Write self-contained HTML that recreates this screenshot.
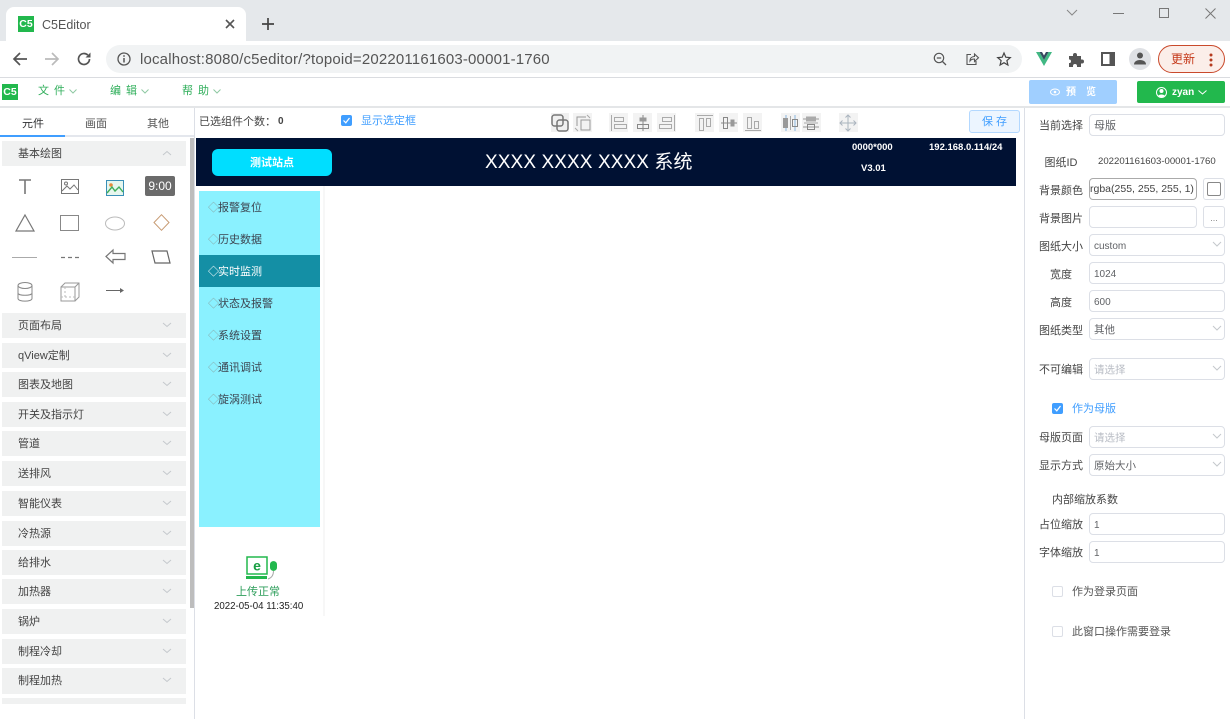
<!DOCTYPE html>
<html lang="zh"><head><meta charset="utf-8"><title>C5Editor</title>
<style>
*{box-sizing:border-box}
html,body{margin:0;padding:0;width:1230px;height:719px;overflow:hidden;background:#fff;font-family:"Liberation Sans","Noto Sans CJK SC",sans-serif;font-size:11px;color:#444}
.a{position:absolute}
.t{position:absolute;white-space:nowrap;line-height:16px}
svg{position:absolute;overflow:visible}
.row{position:absolute;left:2px;width:184px;height:25px;background:#f0f1f1;line-height:27px;padding-left:16px;font-size:11px;color:#444}
.row svg{left:160px;top:9px}
.lb{position:absolute;white-space:nowrap;line-height:16px;font-size:11px;color:#444;text-align:center;width:60px;left:1031px;margin-top:1px}
.in{position:absolute;left:1089px;width:136px;height:22px;border:1px solid #dcdfe6;border-radius:4px;background:#fff;font-size:10px;line-height:23px;padding-left:4px;color:#606266;white-space:nowrap;overflow:hidden}
.in svg{left:122px;top:6px}
.cj{font-size:10.5px}
.ph{color:#b8bcc4}
.mi{position:absolute;left:199px;width:121px;height:32px;line-height:34px;padding-left:9px;font-size:11px;color:#3c4450;white-space:nowrap}
.mi span{margin-right:-1px}
.tb{position:absolute;top:113px;width:19px;height:19px;background:#f3f3f3}
.cb{position:absolute;width:11px;height:11px;border-radius:2px}
</style></head><body>

<!-- browser tab strip -->
<div class="a" style="left:0;top:0;width:1230px;height:41px;background:#e5e8eb"></div>
<div class="a" style="left:6px;top:7px;width:240px;height:34px;background:#fff;border-radius:8px 8px 0 0"></div>
<div class="a" style="left:18px;top:16px;width:16px;height:16px;background:#22b84d;color:#fff;font-size:10.5px;font-weight:bold;line-height:17px;text-align:center">C5</div>
<div class="t" style="left:42px;top:17px;font-size:12.5px;color:#555">C5Editor</div>
<svg style="left:225px;top:19px" width="10" height="10" viewBox="0 0 10 10"><path d="M1 1L9 9M9 1L1 9" stroke="#555" stroke-width="1.6" fill="none"/></svg>
<svg style="left:262px;top:18px" width="12" height="12" viewBox="0 0 12 12"><path d="M6 0V12M0 6H12" stroke="#444" stroke-width="1.7" fill="none"/></svg>
<svg style="left:1066px;top:9px" width="12" height="8" viewBox="0 0 12 8"><path d="M1 1L6 6L11 1" stroke="#888" fill="none"/></svg>
<svg style="left:1113px;top:13px" width="11" height="2"><path d="M0 .5H11" stroke="#777" fill="none"/></svg>
<svg style="left:1159px;top:8px" width="10" height="10"><rect x=".5" y=".5" width="9" height="9" stroke="#777" fill="none"/></svg>
<svg style="left:1205px;top:8px" width="11" height="11"><path d="M.5 .5L10.5 10.5M10.5 .5L.5 10.5" stroke="#777" fill="none"/></svg>

<!-- toolbar -->
<div class="a" style="left:0;top:41px;width:1230px;height:37px;background:#fff;border-bottom:1px solid #dadce0"></div>
<svg style="left:12px;top:51px" width="16" height="16" viewBox="0 0 16 16"><path d="M15 8H2M8 2L2 8L8 14" stroke="#555" stroke-width="1.7" fill="none"/></svg>
<svg style="left:44px;top:51px" width="16" height="16" viewBox="0 0 16 16"><path d="M1 8H14M8 2L14 8L8 14" stroke="#bbb" stroke-width="1.7" fill="none"/></svg>
<svg style="left:76px;top:51px" width="16" height="16" viewBox="0 0 16 16"><path d="M13.5 8A5.5 5.5 0 1 1 11.8 4" stroke="#555" stroke-width="1.7" fill="none"/><path d="M14.5 1.5V6.5H9.5Z" fill="#555"/></svg>
<div class="a" style="left:106px;top:45px;width:916px;height:28px;background:#f1f3f4;border-radius:14px"></div>
<svg style="left:117px;top:52px" width="14" height="14" viewBox="0 0 14 14"><circle cx="7" cy="7" r="6" stroke="#555" stroke-width="1.3" fill="none"/><path d="M7 6V10.5" stroke="#555" stroke-width="1.5"/><circle cx="7" cy="4" r=".9" fill="#555"/></svg>
<div class="t" style="left:140px;top:51px;font-size:15px;letter-spacing:.17px;line-height:18px;color:#555">localhost:8080/c5editor/?topoid=202201161603-00001-1760</div>
<svg style="left:933px;top:52px" width="14" height="14" viewBox="0 0 14 14"><circle cx="6" cy="6" r="4.7" stroke="#555" stroke-width="1.2" fill="none"/><path d="M3.8 6H8.2M9.5 9.5L13 13" stroke="#555" stroke-width="1.3" fill="none"/></svg>
<svg style="left:965px;top:52px" width="14" height="14" viewBox="0 0 14 14"><path d="M6 2.5H2V12.5H11V9M5 9C5 6 7 4.500 9.500 4.500V2L13.500 5.800L9.500 9.500V7C7.500 7 6 7.500 5 9Z" stroke="#555" stroke-width="1.1" fill="none"/></svg>
<svg style="left:997px;top:52px" width="14" height="14" viewBox="0 0 14 14"><path d="M7 1L8.800 5.200L13.300 5.600L9.900 8.600L10.900 13L7 10.700L3.100 13L4.100 8.600L.7 5.600L5.200 5.200Z" stroke="#444" stroke-width="1.2" fill="none"/></svg>
<svg style="left:1036px;top:52px" width="16" height="14" viewBox="0 0 16 14"><path d="M0 0H3.500L8 8L12.500 0H16L8 14Z" fill="#41b883"/><path d="M3.500 0H6L8 3.500L10 0H12.500L8 8Z" fill="#34495e"/></svg>
<svg style="left:1068px;top:52px" width="16" height="15" viewBox="0 0 16 15"><path d="M1 4H5V3A2 2 0 0 1 9 3V4H13V7.500H14A2 2 0 0 1 14 11.500H13V15H9V14A2 2 0 0 0 5 14V15H1V11H2A2 2 0 0 0 2 7.500H1Z" fill="#555"/></svg>
<svg style="left:1101px;top:52px" width="14" height="14" viewBox="0 0 14 14"><rect width="14" height="14" fill="#555"/><rect x="2" y="2" width="6.500" height="10" fill="#fff"/></svg>
<div class="a" style="left:1129px;top:48px;width:22px;height:22px;border-radius:50%;background:#dfe1e5"></div>
<svg style="left:1134px;top:52px" width="12" height="13" viewBox="0 0 12 13"><circle cx="6" cy="3.500" r="3" fill="#555"/><path d="M0 12.500C0 9.500 3 8 6 8S12 9.500 12 12.500Z" fill="#555"/></svg>
<div class="a" style="left:1158px;top:45px;width:67px;height:28px;border:1px solid #c9492b;border-radius:14px;background:#fbeee9"></div>
<div class="t" style="left:1171px;top:51px;font-size:12px;color:#c5391a">更新</div>
<svg style="left:1209px;top:53px" width="4" height="14"><circle cx="2" cy="2" r="1.500" fill="#b53a1d"/><circle cx="2" cy="7" r="1.500" fill="#b53a1d"/><circle cx="2" cy="12" r="1.500" fill="#b53a1d"/></svg>

<!-- app menu -->
<div class="a" style="left:0;top:106px;width:1230px;height:2px;background:#e4e6e8"></div>
<div class="a" style="left:2px;top:84px;width:16px;height:16px;background:#22b84d;color:#fff;font-size:10.5px;font-weight:bold;line-height:17px;text-align:center">C5</div>
<div class="t" style="left:38px;top:83px;color:#2fae5a;letter-spacing:1px">文 件</div>
<div class="t" style="left:110px;top:83px;color:#2fae5a;letter-spacing:1px">编 辑</div>
<div class="t" style="left:182px;top:83px;color:#2fae5a;letter-spacing:1px">帮 助</div>
<svg style="left:69px;top:89px" width="8" height="5"><path d="M.5 .5L4 4L7.500 .5" stroke="#8fc9a3" fill="none"/></svg>
<svg style="left:141px;top:89px" width="8" height="5"><path d="M.5 .5L4 4L7.500 .5" stroke="#8fc9a3" fill="none"/></svg>
<svg style="left:213px;top:89px" width="8" height="5"><path d="M.5 .5L4 4L7.500 .5" stroke="#8fc9a3" fill="none"/></svg>
<div class="a" style="left:1029px;top:80px;width:88px;height:24px;background:#a0cfff;border-radius:2px"></div>
<svg style="left:1050px;top:88px" width="10" height="8" viewBox="0 0 10 8"><ellipse cx="5" cy="4" rx="4.500" ry="3" stroke="#fff" fill="none"/><circle cx="5" cy="4" r="1.300" fill="#fff"/></svg>
<div class="t" style="left:1066px;top:85px;font-size:10px;color:#fff;font-weight:bold">预</div>
<div class="t" style="left:1086px;top:85px;font-size:10px;color:#fff;font-weight:bold">览</div>
<div class="a" style="left:1137px;top:81px;width:88px;height:22px;background:#22b84d;border-radius:2px"></div>
<svg style="left:1156px;top:87px" width="11" height="11" viewBox="0 0 11 11"><circle cx="5.500" cy="5.500" r="5" stroke="#fff" fill="none"/><circle cx="5.500" cy="4" r="2" fill="#fff"/><path d="M2 9C3 7 8 7 9 9L5.500 10.500Z" fill="#fff"/></svg>
<div class="t" style="left:1172px;top:85px;font-size:10px;color:#fff;font-weight:bold">zyan</div>
<svg style="left:1198px;top:90px" width="9" height="5"><path d="M.5 .5L4.500 4L8.500 .5" stroke="#fff" fill="none"/></svg>

<!-- left panel -->
<div class="a" style="left:194px;top:108px;width:1px;height:611px;background:#dcdfe6"></div>
<div class="a" style="left:0;top:135px;width:194px;height:2px;background:#e4e7ed"></div>
<div class="a" style="left:0;top:135px;width:65px;height:2px;background:#409eff"></div>
<div class="t" style="left:22px;top:116px;color:#303133">元件</div>
<div class="t" style="left:85px;top:116px;color:#555">画面</div>
<div class="t" style="left:147px;top:116px;color:#555">其他</div>
<div class="a" style="left:190px;top:138px;width:4px;height:470px;background:#bdbdbd"></div>

<div class="row" style="top:141px">基本绘图<svg width="10" height="6"><path d="M1 5L5 1.500L9 5" stroke="#c4c8cc" fill="none"/></svg></div>

<svg style="left:19px;top:179px" width="12" height="15" viewBox="0 0 12 15"><path d="M0 1H12M6 1V15" stroke="#777" stroke-width="1.600" fill="none"/></svg>
<svg style="left:61px;top:179px" width="18" height="15" viewBox="0 0 18 15"><rect x=".5" y=".5" width="17" height="14" stroke="#777" fill="none"/><circle cx="5" cy="4.500" r="1.500" stroke="#777" fill="none"/><path d="M1 12L6 7L9 10L13 6L17 11" stroke="#777" fill="none"/></svg>
<svg style="left:106px;top:180px" width="18" height="16" viewBox="0 0 18 16"><rect x=".5" y=".5" width="17" height="15" fill="#e6f6ee" stroke="#3a8fb7"/><circle cx="5" cy="5" r="1.800" fill="#e58a3b"/><path d="M1 13L6 7L9 11L13 7L17 12" stroke="#3fae5a" stroke-width="1.400" fill="none"/></svg>
<div class="a" style="left:145px;top:176px;width:30px;height:20px;background:#6b6b6b;border-radius:2px;color:#fff;font-size:12px;line-height:20px;text-align:center">9:00</div>

<svg style="left:15px;top:214px" width="20" height="18" viewBox="0 0 20 18"><path d="M10 1L19 17H1Z" stroke="#777" stroke-width="1.200" fill="none"/></svg>
<svg style="left:60px;top:215px" width="20" height="16"><rect x=".5" y=".5" width="18" height="15" stroke="#888" fill="none"/></svg>
<svg style="left:105px;top:216px" width="20" height="15"><ellipse cx="10" cy="7.500" rx="9.500" ry="6.500" stroke="#bbb" fill="none"/></svg>
<svg style="left:153px;top:214px" width="17" height="17" viewBox="0 0 17 17"><path d="M8.500 .7L16 8.500L8.500 16.300L1 8.500Z" stroke="#c79a72" fill="none"/></svg>

<div class="a" style="left:12px;top:257px;width:25px;height:1px;background:#aaa"></div>
<svg style="left:61px;top:256px" width="18" height="3"><path d="M0 1.500H18" stroke="#777" stroke-width="1.200" stroke-dasharray="4 3" fill="none"/></svg>
<svg style="left:105px;top:249px" width="21" height="15" viewBox="0 0 21 15"><path d="M1 7.500L8 1V4.500H20V10.500H8V14Z" stroke="#777" stroke-width="1.200" fill="none"/></svg>
<svg style="left:151px;top:250px" width="20" height="14" viewBox="0 0 20 14"><path d="M1 1H16L19 13H4Z" stroke="#666" stroke-width="1.200" fill="none"/></svg>

<svg style="left:17px;top:282px" width="16" height="20" viewBox="0 0 16 20"><ellipse cx="8" cy="3.500" rx="7" ry="3" stroke="#888" fill="none"/><path d="M1 3.500V16.500C1 20 15 20 15 16.500V3.500M1 11C1 14 15 14 15 11" stroke="#888" fill="none"/></svg>
<svg style="left:60px;top:282px" width="20" height="20" viewBox="0 0 20 20"><path d="M1 5H15V19H1ZM1 5L5 1H19V15L15 19M15 5L19 1" stroke="#999" fill="none"/><path d="M1 15H3M5 15H15M5 5V15" stroke="#bbb" stroke-dasharray="2 2" fill="none"/></svg>
<svg style="left:106px;top:287px" width="19" height="7" viewBox="0 0 19 7"><path d="M0 3.500H15" stroke="#666" fill="none"/><path d="M14 1L18 3.500L14 6Z" fill="#666"/></svg>

<div class="row" style="top:313px">页面布局<svg width="10" height="6"><path d="M1 1L5 4.500L9 1" stroke="#c4c8cc" fill="none"/></svg></div>
<div class="row" style="top:343px">qView定制<svg width="10" height="6"><path d="M1 1L5 4.500L9 1" stroke="#c4c8cc" fill="none"/></svg></div>
<div class="row" style="top:372px">图表及地图<svg width="10" height="6"><path d="M1 1L5 4.500L9 1" stroke="#c4c8cc" fill="none"/></svg></div>
<div class="row" style="top:402px">开关及指示灯<svg width="10" height="6"><path d="M1 1L5 4.500L9 1" stroke="#c4c8cc" fill="none"/></svg></div>
<div class="row" style="top:431px">管道<svg width="10" height="6"><path d="M1 1L5 4.500L9 1" stroke="#c4c8cc" fill="none"/></svg></div>
<div class="row" style="top:461px">送排风<svg width="10" height="6"><path d="M1 1L5 4.500L9 1" stroke="#c4c8cc" fill="none"/></svg></div>
<div class="row" style="top:491px">智能仪表<svg width="10" height="6"><path d="M1 1L5 4.500L9 1" stroke="#c4c8cc" fill="none"/></svg></div>
<div class="row" style="top:521px">冷热源<svg width="10" height="6"><path d="M1 1L5 4.500L9 1" stroke="#c4c8cc" fill="none"/></svg></div>
<div class="row" style="top:550px">给排水<svg width="10" height="6"><path d="M1 1L5 4.500L9 1" stroke="#c4c8cc" fill="none"/></svg></div>
<div class="row" style="top:579px">加热器<svg width="10" height="6"><path d="M1 1L5 4.500L9 1" stroke="#c4c8cc" fill="none"/></svg></div>
<div class="row" style="top:609px">锅炉<svg width="10" height="6"><path d="M1 1L5 4.500L9 1" stroke="#c4c8cc" fill="none"/></svg></div>
<div class="row" style="top:639px">制程冷却<svg width="10" height="6"><path d="M1 1L5 4.500L9 1" stroke="#c4c8cc" fill="none"/></svg></div>
<div class="row" style="top:668px;height:26px">制程加热<svg width="10" height="6"><path d="M1 1L5 4.500L9 1" stroke="#c4c8cc" fill="none"/></svg></div>
<div class="a" style="left:2px;top:698px;width:184px;height:6px;background:#f0f1f1"></div>

<!-- centre toolbar -->
<div class="t" style="left:199px;top:114px;color:#444">已选组件个数：</div>
<div class="t" style="left:278px;top:114px;font-size:10px;font-weight:bold;color:#444">0</div>
<div class="cb" style="left:341px;top:115px;background:#409eff"></div>
<svg style="left:343px;top:117px" width="7" height="7" viewBox="0 0 7 7"><path d="M.5 3.500L2.800 5.800L6.500 1" stroke="#fff" stroke-width="1.200" fill="none"/></svg>
<div class="t" style="left:361px;top:113px;color:#409eff">显示选定框</div>

<div class="tb" style="left:551px;width:18px;background:#f0f0f0"></div>
<svg style="left:551px;top:114px" width="18" height="18" viewBox="0 0 18 18"><rect x="1" y="1" width="11" height="11" rx="2.500" stroke="#777" stroke-width="1.500" fill="none"/><rect x="6" y="6" width="11" height="11" rx="2.500" stroke="#777" stroke-width="1.500" fill="none"/></svg>
<div class="tb" style="left:573px"></div>
<svg style="left:574px;top:114px" width="18" height="18" viewBox="0 0 18 18"><path d="M3 12V3H12M7 6H16V16H7Z" stroke="#999" fill="none"/><path d="M13 1L16 4M1 14L4 17" stroke="#aaa" fill="none"/></svg>
<div class="tb" style="left:609px"></div>
<svg style="left:610px;top:114px" width="18" height="18" viewBox="0 0 18 18"><path d="M1.500 1V17" stroke="#aaa" fill="none"/><rect x="4.500" y="3.500" width="9" height="4" stroke="#aaa" fill="none"/><rect x="4.500" y="10.500" width="12" height="4" stroke="#aaa" fill="none"/></svg>
<div class="tb" style="left:633px"></div>
<svg style="left:634px;top:114px" width="18" height="18" viewBox="0 0 18 18"><path d="M9 1V17" stroke="#888" fill="none"/><rect x="5.500" y="3.500" width="7" height="4" fill="#999"/><rect x="3.500" y="10.500" width="11" height="4" stroke="#888" fill="none"/></svg>
<div class="tb" style="left:657px"></div>
<svg style="left:658px;top:114px" width="18" height="18" viewBox="0 0 18 18"><path d="M16.500 1V17" stroke="#aaa" fill="none"/><rect x="4.500" y="3.500" width="9" height="4" stroke="#aaa" fill="none"/><rect x="1.500" y="10.500" width="12" height="4" stroke="#aaa" fill="none"/></svg>
<div class="tb" style="left:695px"></div>
<svg style="left:696px;top:114px" width="18" height="18" viewBox="0 0 18 18"><path d="M1 1.500H17" stroke="#aaa" fill="none"/><rect x="3.500" y="4.500" width="4" height="12" stroke="#aaa" fill="none"/><rect x="10.500" y="4.500" width="4" height="8" stroke="#aaa" fill="none"/></svg>
<div class="tb" style="left:719px"></div>
<svg style="left:720px;top:114px" width="18" height="18" viewBox="0 0 18 18"><path d="M1 9H17" stroke="#888" fill="none"/><rect x="3.500" y="3.500" width="4" height="11" stroke="#888" fill="none"/><rect x="10.500" y="5.500" width="4" height="7" fill="#999"/></svg>
<div class="tb" style="left:743px"></div>
<svg style="left:744px;top:114px" width="18" height="18" viewBox="0 0 18 18"><path d="M1 16.500H17" stroke="#aaa" fill="none"/><rect x="3.500" y="3.500" width="4" height="11" stroke="#aaa" fill="none"/><rect x="10.500" y="7.500" width="4" height="7" stroke="#aaa" fill="none"/></svg>
<div class="tb" style="left:781px"></div>
<svg style="left:781px;top:114px" width="19" height="18" viewBox="0 0 19 18"><path d="M5 1V17M14 1V17" stroke="#8ab4dc" fill="none"/><rect x="2" y="4" width="5" height="10" fill="#999"/><rect x="11.500" y="5.500" width="5" height="7" stroke="#888" fill="none"/><path d="M9.500 2V16" stroke="#aaa" fill="none"/></svg>
<div class="tb" style="left:802px"></div>
<svg style="left:802px;top:114px" width="18" height="18" viewBox="0 0 18 18"><path d="M1 5H17M1 13H17" stroke="#999" fill="none"/><rect x="4" y="2.500" width="10" height="5" fill="#aaa"/><rect x="5.500" y="10.500" width="7" height="5" stroke="#888" fill="none"/><path d="M2 9H16" stroke="#aaa" fill="none"/></svg>
<div class="tb" style="left:839px"></div>
<svg style="left:839px;top:114px" width="18" height="18" viewBox="0 0 18 18"><path d="M9 1V17M1 9H17M6.500 3.500L9 1L11.500 3.500M6.500 14.500L9 17L11.500 14.500M3.500 6.500L1 9L3.500 11.500M14.500 6.500L17 9L14.500 11.500" stroke="#aab4be" fill="none"/></svg>
<div class="a" style="left:969px;top:110px;width:51px;height:23px;background:#ecf5ff;border:1px solid #b3d8ff;border-radius:3px;color:#409eff;font-size:11px;line-height:22px;text-align:center;letter-spacing:3px;padding-left:3px">保存</div>

<!-- canvas -->
<div class="a" style="left:196px;top:138px;width:820px;height:48px;background:#001133"></div>
<div class="a" style="left:212px;top:149px;width:120px;height:27px;background:#00deff;border-radius:6px;color:#fff;font-size:11px;font-weight:bold;line-height:29px;text-align:center">测试站点</div>
<div class="t" style="left:485px;top:151px;font-size:19px;letter-spacing:.1px;line-height:24px;color:#fff">XXXX XXXX XXXX 系统</div>
<div class="t" style="left:852px;top:140px;font-size:9.5px;font-weight:bold;color:#fff">0000*000</div>
<div class="t" style="left:929px;top:140px;font-size:9.5px;font-weight:bold;color:#fff">192.168.0.114/24</div>
<div class="t" style="left:861px;top:161px;font-size:9.5px;font-weight:bold;color:#fff">V3.01</div>

<div class="a" style="left:199px;top:191px;width:121px;height:336px;background:#8af1ff"></div>
<div class="a" style="left:323px;top:186px;width:2px;height:430px;background:#f7f7f7"></div>
<div class="a" style="left:199px;top:255px;width:121px;height:32px;background:#148fa5"></div>
<div class="mi" style="top:191px"><span style="color:#8aa">◇</span>报警复位</div>
<div class="mi" style="top:223px"><span style="color:#8aa">◇</span>历史数据</div>
<div class="mi" style="top:255px;color:#fff"><span>◇</span>实时监测</div>
<div class="mi" style="top:287px"><span style="color:#8aa">◇</span>状态及报警</div>
<div class="mi" style="top:319px"><span style="color:#8aa">◇</span>系统设置</div>
<div class="mi" style="top:351px"><span style="color:#8aa">◇</span>通讯调试</div>
<div class="mi" style="top:383px"><span style="color:#8aa">◇</span>旋涡测试</div>

<svg style="left:246px;top:556px" width="32" height="26" viewBox="0 0 32 26"><rect x="1" y="1" width="20" height="17" fill="#fff" stroke="#22b84d" stroke-width="1.500"/><rect x="0" y="20" width="21" height="3" fill="#22b84d"/><text x="11" y="14.500" font-size="14" font-weight="bold" text-anchor="middle" fill="#1a9f44" font-family="Liberation Sans">e</text><path d="M31 8.500C31 4 24 4 24 8.500V11.500C24 16 31 16 31 11.500Z" fill="#22b84d"/><path d="M27.500 15C27.500 20 25 22 22 23" stroke="#aaa" fill="none"/></svg>
<div class="t" style="left:236px;top:584px;color:#2e9e5b">上传正常</div>
<div class="t" style="left:214px;top:599px;font-size:9.7px;color:#222">2022-05-04 11:35:40</div>

<!-- right panel -->
<div class="a" style="left:1024px;top:108px;width:1px;height:611px;background:#dcdfe6"></div>
<div class="lb" style="top:117px">当前选择</div><div class="in cj" style="top:114px;font-size:11px">母版</div>
<div class="lb" style="top:154px">图纸ID</div><div class="t" style="left:1098px;top:154px;font-size:9.6px;color:#444">202201161603-00001-1760</div>
<div class="lb" style="top:182px">背景颜色</div>
<div class="in" style="top:178px;width:108px;font-size:10.5px;padding-left:0;color:#444;border-color:#aaa;line-height:21px">rgba(255, 255, 255, 1)</div>
<div class="a" style="left:1203px;top:178px;width:22px;height:22px;border:1px solid #dcdfe6;border-radius:3px"></div>
<div class="a" style="left:1207px;top:182px;width:14px;height:14px;border:1px solid #888;border-radius:2px"></div>
<div class="lb" style="top:210px">背景图片</div>
<div class="in" style="top:206px;width:108px"></div>
<div class="a" style="left:1203px;top:206px;width:22px;height:22px;border:1px solid #dcdfe6;border-radius:3px;font-size:9px;line-height:22px;text-align:center;color:#888">...</div>
<div class="lb" style="top:238px">图纸大小</div><div class="in" style="top:234px">custom<svg width="10" height="6"><path d="M1 1L5 5L9 1" stroke="#c4c8cc" fill="none"/></svg></div>
<div class="lb" style="top:266px">宽度</div><div class="in" style="top:262px">1024</div>
<div class="lb" style="top:294px">高度</div><div class="in" style="top:290px">600</div>
<div class="lb" style="top:322px">图纸类型</div><div class="in cj" style="top:318px">其他<svg width="10" height="6"><path d="M1 1L5 5L9 1" stroke="#c4c8cc" fill="none"/></svg></div>
<div class="lb" style="top:361px">不可编辑</div><div class="in ph cj" style="top:358px">请选择<svg width="10" height="6"><path d="M1 1L5 5L9 1" stroke="#c4c8cc" fill="none"/></svg></div>
<div class="cb" style="left:1052px;top:403px;background:#409eff"></div>
<svg style="left:1054px;top:405px" width="7" height="7" viewBox="0 0 7 7"><path d="M.5 3.500L2.800 5.800L6.500 1" stroke="#fff" stroke-width="1.200" fill="none"/></svg>
<div class="t" style="left:1072px;top:401px;color:#409eff">作为母版</div>
<div class="lb" style="top:429px">母版页面</div><div class="in ph cj" style="top:426px">请选择<svg width="10" height="6"><path d="M1 1L5 5L9 1" stroke="#c4c8cc" fill="none"/></svg></div>
<div class="lb" style="top:457px">显示方式</div><div class="in cj" style="top:454px">原始大小<svg width="10" height="6"><path d="M1 1L5 5L9 1" stroke="#c4c8cc" fill="none"/></svg></div>
<div class="t" style="left:1052px;top:492px;color:#444">内部缩放系数</div>
<div class="lb" style="top:516px">占位缩放</div><div class="in" style="top:513px">1</div>
<div class="lb" style="top:544px">字体缩放</div><div class="in" style="top:541px">1</div>
<div class="cb" style="left:1052px;top:586px;background:#fff;border:1px solid #dcdfe6"></div>
<div class="t" style="left:1072px;top:584px;color:#555">作为登录页面</div>
<div class="cb" style="left:1052px;top:626px;background:#fff;border:1px solid #dcdfe6"></div>
<div class="t" style="left:1072px;top:624px;color:#555">此窗口操作需要登录</div>
</body></html>
